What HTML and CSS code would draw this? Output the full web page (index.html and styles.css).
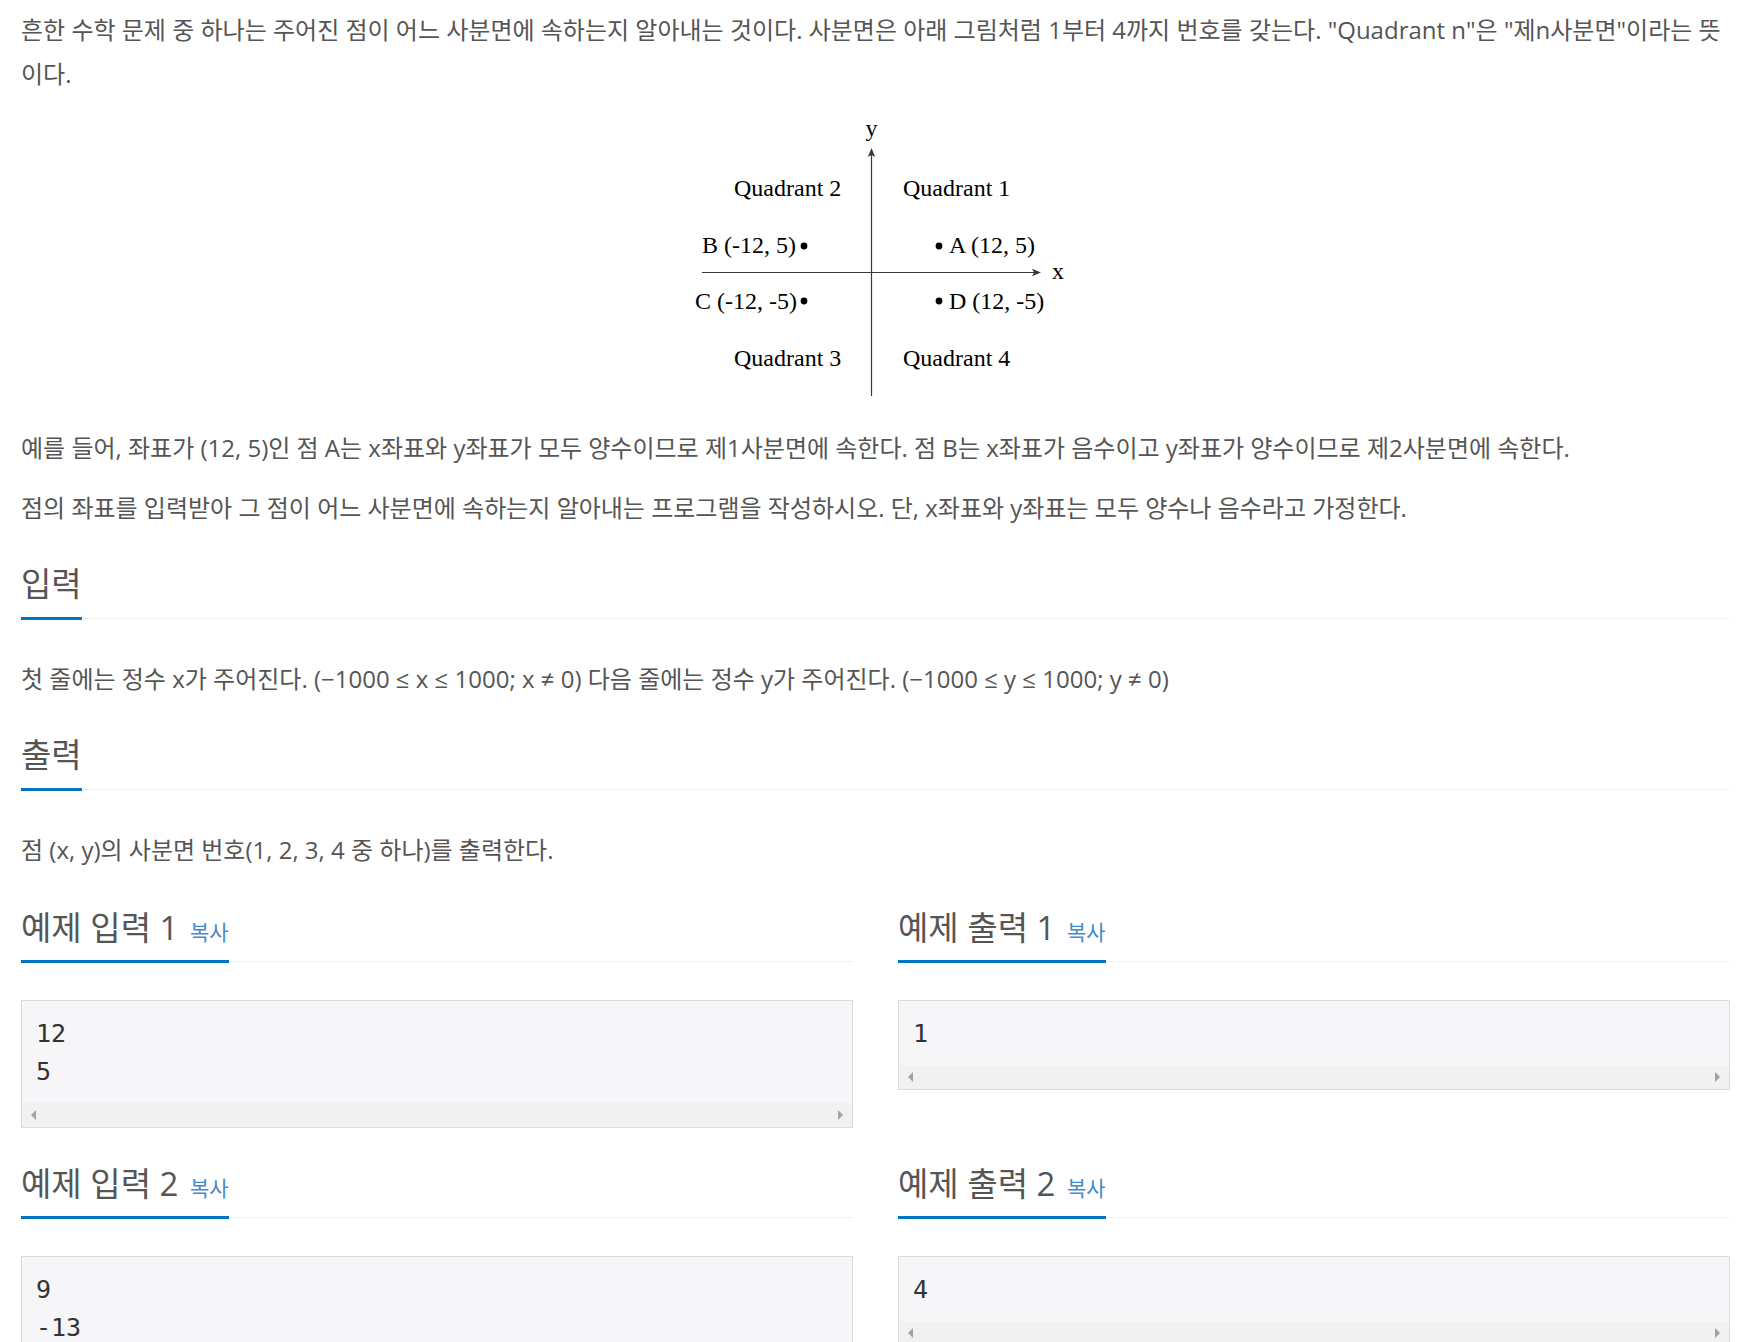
FILE: index.html
```html
<!DOCTYPE html>
<html lang="ko">
<head>
<meta charset="utf-8">
<title>사분면 고르기</title>
<link rel="stylesheet" href="styles.css">
</head>
<body>
<section class="section">
  <p>흔한 수학 문제 중 하나는 주어진 점이 어느 사분면에 속하는지 알아내는 것이다. 사분면은 아래 그림처럼 1부터 4까지 번호를 갖는다. "Quadrant n"은 "제n사분면"이라는 뜻이다.</p>
  <div class="figure">
    <svg class="diagram" width="1709" height="298" viewBox="21 112 1709 298" xmlns="http://www.w3.org/2000/svg">
      <g class="axes" stroke="#3a3a3a" stroke-width="1.2" fill="none">
        <line x1="871.5" y1="396" x2="871.5" y2="153"/>
        <line x1="702" y1="272.5" x2="1036" y2="272.5"/>
      </g>
      <g fill="#3a3a3a">
        <path d="M871.5 148 L867.8 157 L871.5 155 L875.2 157 Z"/>
        <path d="M1041 272.5 L1032 268.8 L1034 272.5 L1032 276.2 Z"/>
      </g>
      <g class="labels" font-family="Liberation Serif, serif" font-size="24" fill="#000">
        <text x="871.5" y="136" text-anchor="middle">y</text>
        <text x="1052" y="279">x</text>
        <text x="734" y="196">Quadrant 2</text>
        <text x="903" y="196">Quadrant 1</text>
        <text x="702" y="253">B (-12, 5)</text>
        <text x="949" y="253">A (12, 5)</text>
        <text x="695" y="309">C (-12, -5)</text>
        <text x="949" y="309">D (12, -5)</text>
        <text x="734" y="366">Quadrant 3</text>
        <text x="903" y="366">Quadrant 4</text>
      </g>
      <g fill="#000">
        <circle cx="804" cy="246" r="3.4"/>
        <circle cx="939" cy="246" r="3.4"/>
        <circle cx="804" cy="301" r="3.4"/>
        <circle cx="939" cy="301" r="3.4"/>
      </g>
    </svg>
  </div>
  <p>예를 들어, 좌표가 (12, 5)인 점 A는 x좌표와 y좌표가 모두 양수이므로 제1사분면에 속한다. 점 B는 x좌표가 음수이고 y좌표가 양수이므로 제2사분면에 속한다.</p>
  <p>점의 좌표를 입력받아 그 점이 어느 사분면에 속하는지 알아내는 프로그램을 작성하시오. 단, x좌표와 y좌표는 모두 양수나 음수라고 가정한다.</p>
</section>

<section class="section">
  <div class="headline"><h2>입력</h2></div>
  <p>첫 줄에는 정수 x가 주어진다. (−1000 ≤ x ≤ 1000; x ≠ 0) 다음 줄에는 정수 y가 주어진다. (−1000 ≤ y ≤ 1000; y ≠ 0)</p>
</section>

<section class="section">
  <div class="headline"><h2>출력</h2></div>
  <p>점 (x, y)의 사분면 번호(1, 2, 3, 4 중 하나)를 출력한다.</p>
</section>

<div class="sample-row">
  <div class="sample-col">
    <div class="headline"><h2>예제 입력 1 <button type="button" class="copy">복사</button></h2></div>
    <div class="sample-box">
      <pre class="sampledata">12
5</pre>
      <div class="hscroll"><span class="arrow left"></span><span class="arrow right"></span></div>
    </div>
  </div>
  <div class="sample-col">
    <div class="headline"><h2>예제 출력 1 <button type="button" class="copy">복사</button></h2></div>
    <div class="sample-box">
      <pre class="sampledata">1</pre>
      <div class="hscroll"><span class="arrow left"></span><span class="arrow right"></span></div>
    </div>
  </div>
</div>

<div class="sample-row">
  <div class="sample-col">
    <div class="headline"><h2>예제 입력 2 <button type="button" class="copy">복사</button></h2></div>
    <div class="sample-box">
      <pre class="sampledata">9
-13</pre>
      <div class="hscroll"><span class="arrow left"></span><span class="arrow right"></span></div>
    </div>
  </div>
  <div class="sample-col">
    <div class="headline"><h2>예제 출력 2 <button type="button" class="copy">복사</button></h2></div>
    <div class="sample-box">
      <pre class="sampledata">4</pre>
      <div class="hscroll"><span class="arrow left"></span><span class="arrow right"></span></div>
    </div>
  </div>
</div>
</body>
</html>
```

FILE: styles.css
```css
html, body {
  background: #fff;
}

body {
  margin: 0;
  padding: 8px 14px 0 21px;
  font-family: "Open Sans", "Noto Sans CJK KR", sans-serif;
  font-size: 24px;
  color: #555;
}

.section {
  display: flow-root;
}

p {
  margin: 0 0 16px;
  line-height: 44px;
}

.figure {
  margin: 0 0 16px;
  height: 298px;
}

.diagram {
  display: block;
}

.headline {
  margin: 14px 0 38px;
  border-bottom: 1px dotted #dfe4ea;
}

.headline h2 {
  display: inline-block;
  margin: 0 0 -2px;
  padding-bottom: 9px;
  border-bottom: 3px solid #0076c0;
  font-size: 33px;
  font-weight: 400;
  line-height: 48px;
  color: #555;
}

.sample-col .headline {
  margin-top: 15px;
}

.sample-col .headline h2 {
  line-height: 50px;
  padding-bottom: 7px;
}

.copy {
  margin: 0 0 0 3px;
  padding: 0;
  border: 0;
  background: none;
  font-family: "Open Sans", "Noto Sans CJK KR", sans-serif;
  font-size: 21px;
  color: #428bca;
  cursor: pointer;
}

.sample-row {
  display: grid;
  grid-template-columns: 1fr 1fr;
  column-gap: 45px;
}

.sample-box {
  margin-bottom: 16px;
  border: 1px solid #dcdcdc;
  background: #f6f6f8;
}

.sampledata {
  margin: 0;
  padding: 14px 14px 12px;
  font-family: "DejaVu Sans Mono", monospace;
  font-size: 25px;
  line-height: 38px;
  color: #333;
}

.hscroll {
  height: 24px;
  background: #f1f1f1;
  display: flex;
  justify-content: space-between;
  align-items: center;
  padding: 0 9px;
}

.arrow {
  width: 0;
  height: 0;
  border-top: 5px solid transparent;
  border-bottom: 5px solid transparent;
}

.arrow.left {
  border-right: 5px solid #a3a3a3;
}

.arrow.right {
  border-left: 5px solid #a3a3a3;
}
```
